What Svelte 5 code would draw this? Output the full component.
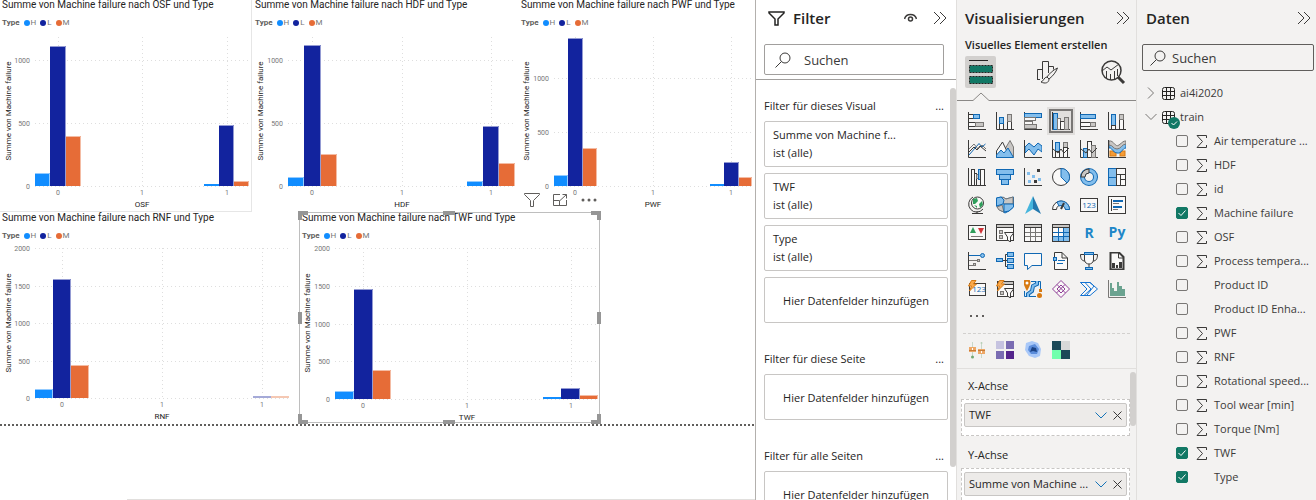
<script>
  const D = '#3b3a39', B = '#83beec', K = '#1068b3', G = '#c8c6c4', W = '#faf9f8', H = '#797775';
  const box = (x, y, w, h, fill, stroke) => `<rect x="${x}" y="${y}" width="${w}" height="${h}" fill="${fill}" stroke="${stroke}"/>`;
  const line = (d, stroke = D, fill = 'none', w = 1) => `<path d="${d}" stroke="${stroke}" fill="${fill}" stroke-width="${w}"/>`;
  const axis = line('M.5 0V17.5H18');
  const bolt = line('M3.500.5H8L5.500 4H8.500L1.500 11 3.500 6H.5Z', '#d87a12', '#fba94b');
  const funnel = line('M8.500 8.500H18L14.500 13V18L11.500 16V13Z', D, W);

  const icons = [
    ['Gestapeltes Balkendiagramm', axis + box(.5, 10.5, 7, 4, W, D) + box(7.5, 10.5, 8, 4, G, H) + box(.5, 2.5, 5, 4, W, D) + box(5.5, 2.5, 6, 4, B, K)],
    ['Gestapeltes Säulendiagramm', axis + box(3.5, 11.5, 4, 6, W, D) + box(3.5, 5.5, 4, 6, B, K) + box(11.5, 9.5, 4, 8, W, D) + box(11.5, 2.5, 4, 7, G, H)],
    ['Gruppiertes Balkendiagramm', axis + box(.5, 1.5, 17, 4, B, K) + box(.5, 5.5, 11, 3, W, H) + box(.5, 9.5, 8, 3, W, H) + box(.5, 12.5, 12, 4, G, H)],
    ['Gruppiertes Säulendiagramm', axis + box(1.5, 1.5, 4, 16, B, K) + box(5.5, 6.5, 3, 11, W, H) + box(8.5, 9.5, 4, 8, W, D) + box(12.5, 5.5, 4, 12, G, H)],
    ['Gestapelte Balken 100 %', axis + box(.5, 2.5, 15, 4, B, K) + box(.5, 10.5, 10, 4, W, D) + box(10.5, 10.5, 5, 4, G, H)],
    ['Gestapelte Säulen 100 %', axis + box(3.5, 2.5, 4, 11, B, K) + box(3.5, 13.5, 4, 4, W, D) + box(11.5, 7.5, 4, 10, W, D) + box(11.5, 2.5, 4, 5, G, H)],
    ['Liniendiagramm', axis + line('M1 15 11 3.500 14 7 17.500 4', K) + line('M1 9 6 4 10 9 14 5 18 9', H) + line('M1 12 6 7 9 10 12 6 18 11', D)],
    ['Flächendiagramm', line('M9 9 14 .5 17.500 7V17H13Z', H, G) + line('M.5 11 6.500 2 14 17.500H.5Z', D, W) + line('M.5 17.500V15L5 10 8 13 12 8 17.500 17.500Z', K, B)],
    ['Gestapeltes Flächendiagramm', line('M1 7 5 3 10 7 14 3 18 6V12L14 9 10 15 5 9 1 13Z', K, B) + axis],
    ['Linien und gestapelte Säulen', axis + box(3.5, 2.5, 4, 9, B, K) + box(3.5, 11.5, 4, 6, W, D) + box(11.5, 2.5, 4, 5, G, H) + box(11.5, 7.5, 4, 10, W, D) + line('M1 9 6 13 9 9 12 13 17 8')],
    ['Linien und gruppierte Säulen', axis + box(3.5, 8.5, 4, 9, B, K) + box(7.5, 1.5, 4, 16, W, D) + box(11.5, 5.5, 4, 12, G, H) + line('M1 9 6 13 9 9 12 13 17 8')],
    ['Menübanddiagramm', box(2, 11, 6, 5, '#f49b36', '#d87a12') + box(12, 11, 5, 5, '#f49b36', '#d87a12') + line('M1 3C6 2 7 12 12 7S16 3 18 3V8C14 8 14 14 9 13S4 7 1 8Z', K, B) + line('M1 1C6 0 7 8 11 5S15 1 18 1V4C14 4 13 9 9 9S5 5 1 5Z', H, G) + axis],
    ['Wasserfalldiagramm', axis + box(3.5, 1.5, 3, 16, W, D) + box(6.5, 5.5, 2, 12, W, D) + box(8.5, 6.5, 2, 4, G, H) + box(10.5, 1.5, 2, 10, B, K) + box(12.5, 1.5, 4, 16, W, D)],
    ['Trichter', box(.5, 1.5, 17, 5, B, K) + box(3.5, 6.5, 11, 5, B, K) + box(5.5, 11.5, 7, 5, B, K)],
    ['Punktdiagramm', axis + `<g fill="${B}"><path d="M3 4h3v3H3zM8 7h3v3H8zM4 12h3v3H4zM14 10h3v3h-3z"/></g><path fill="${D}" d="M13 1h3v3h-3zM10 12h3v3h-3z"/>`],
    ['Kreisdiagramm', `<circle cx="9" cy="9" r="8.500" fill="${W}" stroke="${D}"/>` + line('M9 9V.5A8.500 8.500 0 0 1 15 15Z', K, B)],
    ['Ringdiagramm', `<circle cx="9" cy="9" r="6.500" fill="none" stroke="${K}" stroke-width="5"/><circle cx="9" cy="9" r="6.500" fill="none" stroke="${B}" stroke-width="3"/>` + line('M1 9A8 8 0 0 1 9 1V5A4 4 0 0 0 5 9Z', D, G)],
    ['Treemap', box(.5, .5, 8, 9, B, K) + box(.5, 9.5, 8, 8, B, K) + box(8.5, .5, 9, 6, W, D) + box(8.5, 6.5, 4, 11, W, D) + box(12.5, 6.5, 5, 5, W, D) + box(12.5, 11.5, 5, 6, W, D)],
    ['Karte', `<circle cx="9.500" cy="7" r="6" fill="${W}" stroke="${D}"/><path d="M5 3l4-1 1 3-3 3-2 0zM11 8l3-3 1 4-3 3zM6 9l3 1v2z" fill="#2f9e5b"/>` + line('M5 1A8 8 0 1 0 15 13M9 15V17M4 17.500H15')],
    ['Flächenkartogramm', line('M.5 2 6 1 10 3 17.500 1V11L13 15 9 17 4 14 .5 10Z', K, B) + line('M7 1 10 3 17 1V8H8L5 5Z', H, G) + line('M1 11 6 9 8 16 3 14Z', H, G) + line('M.5 2V10L7 8 8 4 5 1ZM8 8 8 16 13 15 17.500 11V8Z', K, B)],
    ['Azure-Karte', '<path d="M9 0 1 18 9 13Z" fill="#45b5dd"/><path d="M9 0 17 18 9 13Z" fill="#2378ae"/>'],
    ['Messgerät', line('M.5 13.500A8.500 8.500 0 0 1 17.500 13.500H13.500A4.500 4.500 0 0 0 4.500 13.500Z', D, W) + line('M5 6A8.500 8.500 0 0 1 17.500 13.500H13.500A4.500 4.500 0 0 0 7 10Z', K, B) + line('M12 7 9 13', D, 'none', 2)],
    ['Karte mit Zahl', box(.5, 2.5, 17, 13, W, D) + `<text x="9" y="12" font-size="8" text-anchor="middle" fill="${K}">123</text>`],
    ['Mehrzeilige Karte', box(.5, .5, 17, 17, W, D) + line('M3.500 3V15', D) + line('M5 5H15M5 11H14', K, 'none', 2) + line('M5 7.500H11M5 13.500H10', H)],
    ['KPI', box(.5, 1.5, 17, 14, W, D) + '<path d="M2 9 5 3 8 9Z" fill="#2f9e5b"/><path d="M10 4H16L13 10Z" fill="#d13438"/>' + line('M3 12.500H15', H)],
    ['Datenschnitt', box(.5, .5, 17, 16, W, D) + box(1, 1, 16, 2, G, 'none') + line('M.5 3.500H18') + box(3.5, 6.5, 3, 3, G, H) + box(3.5, 11.5, 3, 3, G, H) + funnel],
    ['Tabelle', box(.5, .5, 17, 17, W, D) + box(1, 1, 16, 2, G, 'none') + line('M.5 3.500H18') + line('M1 8.500H17M1 12.500H17M6.500 4V17M11.500 4V17', H)],
    ['Matrix', box(.5, .5, 17, 17, W, D) + box(1, 1, 16, 2, G, 'none') + `<path fill="${B}" d="M12 4h5v13H1v-4h11z"/>` + line('M.5 3.500H18') + line('M1 8.500H17M1 12.500H17M6.500 4V17M11.500 4V17', K)],
    ['R-Skriptvisual', '<text x="9" y="14" font-size="14" font-weight="700" text-anchor="middle" fill="#2086c8">R</text>'],
    ['Python-Visual', '<text x="9" y="13" font-size="14" font-weight="700" text-anchor="middle" fill="#2086c8">Py</text>'],
    ['Wichtige Einflussfaktoren', axis + line('M1 3.500H12', K) + line('M1 8.500H9M1 13.500H5', H) + `<circle cx="14.500" cy="3.500" r="2" fill="${B}" stroke="${K}"/>` + box(9.5, 7.5, 2, 2, G, H) + box(5.5, 11.5, 2, 2, G, H)],
    ['Analysebaum', line('M6 8.500H12M9.500 2.500V14.500M9.500 2.500H12M9.500 14.500H12') + box(.5, 6.5, 6, 3, B, K) + box(11.5, .5, 6, 4, B, K) + box(11.5, 6.5, 6, 4, B, K) + box(11.5, 12.5, 6, 4, B, K)],
    ['Q&A', line('M.5 1.500H17.500V13.500H8L3.500 17.500V13.500H.5Z', K, W)],
    ['Smarte Erzählung', line('M2.500 5V.5H10L15.500 6V17.500H2.500V9M10 .5V6H15.500', D, W) + box(1.5, 5.5, 3, 3, B, K) + line('M6 8.500H13M5 11.500H11', K)],
    ['Metriken', line('M4.500 2.500H.5C.5 7 2 9 5 9M13.500 2.500H17.500C17.500 7 16 9 13 9') + line('M4.500 1V8C5 11 7 12 9 12S13 11 13.500 8V1M9 12V15', D, W) + box(4.5, .5, 9, 2, B, K) + box(5.5, 15.5, 7, 2, B, K)],
    ['Paginierter Bericht', line('M2.500.5H11L15.500 5V17.500H2.500Z', D, W, 2) + line('M10.500 1V6H15') + `<path fill="${D}" d="M4 11h3v5H4zM8 13h2v3H8zM11 10h3v6h-3z"/>`],
    ['Neue Karte', box(1.5, 3.5, 16, 12, W, D) + `<text x="11" y="12" font-size="8" text-anchor="middle" fill="${K}">123</text>` + bolt],
    ['Neuer Datenschnitt', box(1.5, 1.5, 16, 15, W, D) + box(7, 2, 10, 2, G, 'none') + line('M7 4.500H18') + box(4.5, 11.5, 3, 3, G, H) + funnel + bolt],
    ['ArcGIS Maps', line('M7 1.500H16.500V9M12 16.500H.5V11', K, '#dceffb') + line('M4 17V14L8 11 9 6 13 4V1', K, 'none', 4) + line('M4 17V14L8 11 9 6 13 4V1', B, 'none', 2) + '<path d="M3 11C-2 3-1-1 3-1S8 3 3 11Z" fill="#d87a12"/><circle cx="3" cy="3" r="1.500" fill="#fff"/><circle cx="15.500" cy="15.500" r="2.500" fill="#d87a12"/><path d="M15 9h3v3h-3z" fill="#d87a12"/>'],
    ['Power Apps', line('M9 .5 17.500 9 9 17.500.5 9ZM5 4.500 13.500 13M13 4.500 4.500 13M9 5 13 9 9 13 5 9Z', '#8f3f97', W)],
    ['Power Automate', line('M.5 2.500H10L17.500 9 10 15.500H.5L7 9Z', '#1473d2', W) + line('M.5 2.500 7 9M5 2.500 11 9 4 15.500M10 2.500 14 6 7 15M7 9 1 15', '#1473d2')],
    ['Histogramm', '<path d="M2 3h2v5h2v3h3V2h2v4h3v3h3v7H2z" fill="#6ba390"/>' + line('M.5 0V17.500H18', H)]
  ];

  const custom = [
    ['Boxplot', '<path d="M4.500 1V17M13.500 1V17" stroke="#c9d8c9" fill="none"/><path d="M1 6h7v5H1zM10 8h7v5h-7z" fill="#eda766"/><path d="M1 9h7v1H1zM10 9h7v1h-7z" fill="#c77b38"/><path d="M4 7h1v2H4zM13 10h1v2h-1z" fill="#fff"/><circle cx="4.500" cy="16" r="1.500" fill="#72a873"/><circle cx="13.500" cy="2" r="1" fill="#b8d2b8"/>'],
    ['Heatmap', '<path fill="#c6c3e0" d="M0 0h8v8H0z"/><path fill="#7a6cb2" d="M10 0h8v8h-8zM0 10h8v8H0z"/><path fill="#54248c" d="M10 10h8v8h-8z"/>'],
    ['Dichtekarte', '<path d="M2 2 8 0 14 2 17 8 16 15 11 17 5 15 1 9Z" fill="#a9c8f8"/><path d="M5 5 11 3 15 8 13 13 7 13 4 9Z" fill="#5c8ddb"/><path d="M8 6 12 7 13 11 9 10 6 11Z" fill="#1b4387"/>'],
    ['Kacheln', '<path fill="#1b4958" d="M0 0h9v9H0zM9 9h9v9H9z"/><path fill="#d8d8d8" d="M9 0h9v9H9z"/><path fill="#71ffad" d="M0 9h9v9H0z"/>']
  ];

  // Visuals in report coordinates; bars are [left, width, top, series].
  const visuals = [
    { name: 'OSF', x: 0, y: -2, w: 252, h: 214, cls: 'framed', base: 186, top: 37, from: 35, to: 249, cols: [58, 142, 227],
      ticks: [[60, '1000'], [123, '500'], [186, '0']], tx: 30, yx: 11, yc: 111,
      bars: [[35, 15, 173, 0], [50, 16, 46, 1], [66, 15, 136, 2], [204, 15, 184, 0], [219, 15, 125, 1], [234, 15, 181, 2]] },
    { name: 'HDF', x: 253, y: -2, w: 265, h: 214, cls: '', base: 186, top: 37, from: 288, to: 515, cols: [312, 402, 491],
      ticks: [[60, '1000'], [123, '500'], [186, '0']], tx: 283, yx: 263, yc: 111,
      bars: [[288, 16, 177, 0], [304, 17, 45, 1], [321, 16, 154, 2], [467, 16, 181, 0], [483, 16, 126, 1], [499, 16, 163, 2]] },
    { name: 'PWF', x: 519, y: -2, w: 236, h: 214, cls: '', base: 186, top: 37, from: 554, to: 752, cols: [575, 653, 731],
      ticks: [[78, '1000'], [132, '500'], [186, '0']], tx: 549, yx: 529, yc: 111,
      bars: [[554, 14, 175, 0], [568, 15, 38, 1], [583, 14, 148, 2], [710, 14, 184, 0], [724, 15, 162, 1], [739, 13, 177, 2]] },
    { name: 'RNF', x: 0, y: 211, w: 298, h: 212, cls: '', base: 398, top: 248, from: 35, to: 289, cols: [62, 162, 262],
      ticks: [[248, '2000'], [286, '1500'], [323, '1000'], [361, '500'], [398, '0']], tx: 30, yx: 11, yc: 323,
      bars: [[35, 18, 389, 0], [53, 18, 279, 1], [71, 18, 365, 2], [253, 18, 396, 3], [271, 18, 396, 4]] },
    { name: 'TWF', x: 300, y: 211, w: 300, h: 212, cls: 'selected', base: 399, top: 248, from: 335, to: 599, cols: [363, 467, 571],
      ticks: [[248, '2000'], [286, '1500'], [324, '1000'], [361, '500'], [399, '0']], tx: 330, yx: 310, yc: 323,
      bars: [[335, 19, 391, 0], [354, 19, 289, 1], [373, 18, 370, 2], [543, 18, 397, 0], [561, 19, 388, 1], [580, 18, 395, 2]] }
  ];
  const colors = ['#118dff', '#12239e', '#e66c37', '#a5aad8', '#f5c8b3'];
  const legend = ['H', 'L', 'M'];

  const sections = [
    { title: 'Filter für dieses Visual', cards: ['Summe von Machine f...', 'TWF', 'Type'] },
    { title: 'Filter für diese Seite', cards: [] },
    { title: 'Filter für alle Seiten', cards: [] }
  ];
  const wells = [['X-Achse', 'TWF'], ['Y-Achse', 'Summe von Machine ...']];
  const fields = [
    ['Air temperature ...', true, false], ['HDF', true, false], ['id', true, false], ['Machine failure', true, true],
    ['OSF', true, false], ['Process tempera...', true, false], ['Product ID', false, false],
    ['Product ID Enha...', false, false], ['PWF', true, false], ['RNF', true, false], ['Rotational speed...', true, false],
    ['Tool wear [min]', true, false], ['Torque [Nm]', true, false], ['TWF', true, true], ['Type', false, true]
  ];
</script>

{#snippet chevrons()}
  <svg width="14" height="14" viewBox="0 0 14 14" fill="none" stroke="#3b3a39"><path d="M1 1l6 6-6 6M7 1l6 6-6 6" /></svg>
{/snippet}

{#snippet magnifier()}
  <svg class="mag" width="16" height="16" viewBox="0 0 16 16" fill="none" stroke="#3b3a39"><circle cx="10" cy="6" r="5" /><path d="M6.500 9.500.5 15.500" /></svg>
{/snippet}

{#snippet tableIcon()}
  <svg width="13" height="13" viewBox="0 0 13 13" fill="none" stroke="#252423"><rect x=".5" y=".5" width="12" height="12" rx="2" /><path d="M0 4.500h13M0 8.500h13M4.500 0v13M8.500 0v13" /></svg>
{/snippet}

<div class="app">
  <main class="report">
    {#each visuals as v}
      <section class="visual {v.cls}" style="left:{v.x}px;top:{v.y}px;width:{v.w}px;height:{v.h}px">
        <h3>Summe von Machine failure nach {v.name} und Type</h3>
        <div class="legend"><b>Type</b>{#each legend as l, i}<span><i style="background:{colors[i]}"></i>{l}</span>{/each}</div>
        <svg class="plot" width={v.w} height={v.h - 35} viewBox="{v.x} {v.y + 35} {v.w} {v.h - 35}">
          <g class="grid">
            {#each v.ticks as [y]}<path d="M{v.from} {y + 0.5}H{v.to}" />{/each}
            {#each v.cols as x}<path d="M{x + 0.5} {v.top}V{v.base}" />{/each}
          </g>
          {#each v.bars as [x, w, t, c]}
            <rect {x} y={t} width={w} height={v.base - t} fill={colors[c]} />
            {#if v.base - t > 2}<path d="M{x} {t + 0.5}h{w - 0.5}V{v.base}" fill="none" stroke="#fff" stroke-opacity=".55" />{/if}
          {/each}
          {#each v.ticks as [y, label]}<text class="tick" x={v.tx} y={y + 3} text-anchor="end">{label}</text>{/each}
          {#each v.cols as x, i}<text class="tick" {x} y={v.base + 9} text-anchor="middle">{i ? 1 : 0}</text>{/each}
          <text class="name" x={v.cols[1]} y={v.base + 21} text-anchor="middle">{v.name}</text>
          <text class="name" text-anchor="middle" transform="translate({v.yx} {v.yc}) rotate(-90)">Summe von Machine failure</text>
        </svg>
        {#if v.cls === 'selected'}
          <svg class="handles" width="304" height="214" viewBox="0 0 304 214" fill="none">
            <rect x="1.500" y="2.500" width="300" height="210" stroke="#bebebe" />
            <path d="M2 10V3H10M293 3H301V10M301 204V212H293M10 212H2V204M145 3H157M145 212H157M2 102V114M301 102V114" stroke="#969696" stroke-width="4" />
          </svg>
        {/if}
      </section>
    {/each}
    <div class="tools">
      <button aria-label="Filter"><svg width="16" height="16" viewBox="0 0 16 16" fill="#fff" stroke="#605e5c"><path d="M.5 1.500h15v1L9.500 8.500v6h-3v-6L.5 2.500Z" /></svg></button>
      <button aria-label="Fokusmodus"><svg width="15" height="14" viewBox="0 0 15 14" fill="none" stroke="#605e5c"><path d="M7 1.500H.5v11h13V7M.5 7.500h6v5M7 7.500 13.500 1.500M9.500 1.500h4v4" /></svg></button>
      <button aria-label="Weitere Optionen"><svg width="16" height="4" viewBox="0 0 16 4" fill="#605e5c"><circle cx="2" cy="2" r="1.500" /><circle cx="8" cy="2" r="1.500" /><circle cx="14" cy="2" r="1.500" /></svg></button>
    </div>
    <div class="page-end"></div>
    <div class="tabs"></div>
  </main>

  <aside class="filters">
    <header>
      <svg width="17" height="15" viewBox="0 0 17 15" fill="none" stroke="#252423" stroke-width="1.500"><path d="M1 1h15v1L10 8v6H7V8L1 2Z" /></svg>
      <h2>Filter</h2>
      <button class="eye" aria-label="Filterbereich anzeigen"><svg width="13" height="10" viewBox="0 0 13 10" fill="none" stroke="#3b3a39"><path d="M.5 6C2 0 11 0 12.500 6" stroke-width="1.500" /><circle cx="6.500" cy="6" r="2" stroke-width="1.500" /></svg></button>
      <button aria-label="Filter einklappen">{@render chevrons()}</button>
    </header>
    <label class="search">{@render magnifier()}<input type="text" placeholder="Suchen" aria-label="Suchen" /></label>
    <div class="filter-list">
      {#each sections as s}
        <div class="section-head"><span>{s.title}</span><button aria-label="Mehr">...</button></div>
        {#each s.cards as c}
          <div class="card"><div>{c}</div><div>ist (alle)</div></div>
        {/each}
        <div class="card drop">Hier Datenfelder hinzufügen</div>
      {/each}
      <div class="thumb"></div>
    </div>
  </aside>

  <aside class="vis">
    <header><h2>Visualisierungen</h2><button aria-label="Visualisierungen einklappen">{@render chevrons()}</button></header>
    <h4>Visuelles Element erstellen</h4>
    <div class="modes">
      <button class="on" aria-label="Visual erstellen"><svg width="24" height="26" viewBox="0 0 24 26"><path d="M0 1.500h19" stroke="#252423" /><g fill="#117865" stroke="#252423" stroke-dasharray="2 1"><rect x=".5" y="6.500" width="23" height="7" /><rect x=".5" y="17.500" width="23" height="7" /></g></svg></button>
      <button aria-label="Visual formatieren"><svg width="24" height="26" viewBox="0 0 24 26" fill="none" stroke="#3b3a39"><path d="M2.500 21V10.500h5M7.500 20V2.500h6V14M13.500 7.500h5v3M5 20.500H2" /><path d="M22.500 9C18 11 14 15 12 18l2 2c4-3 7-7 8.500-11ZM12 18c-3 0-3 4-6 5 4 2 8 1 8-3" fill="#f3f2f1" /></svg></button>
      <button aria-label="Analysen"><svg width="26" height="26" viewBox="0 0 26 26" fill="none" stroke="#3b3a39"><circle cx="11.500" cy="11.500" r="9.500" stroke-width="1.500" /><path d="M2 12l5-4 4 3 8-6M6.500 12v7M10.500 15v6M14.500 12v8M17.500 10v7" /><path d="m18 18 6 6" stroke-width="3" /></svg></button>
    </div>
    <svg class="divider" width="180" height="10" viewBox="0 0 180 10" fill="none" stroke="#8a8886"><path d="M0 8.500H16L24 1 32 8.500H180" /></svg>
    <div class="icons">
      {#each icons as [label, art], i}
        <button class:active={i === 3} aria-label={label}><svg width="18" height="18" viewBox="0 0 18 18">{@html art}</svg></button>
      {/each}
      <button aria-label="Weitere Visuals abrufen"><svg width="18" height="18" viewBox="0 0 18 18" fill="#605e5c"><path d="M2 7h2v2H2zM8 7h2v2H8zM14 7h2v2h-2z" /></svg></button>
    </div>
    <div class="icons custom">
      {#each custom as [label, art]}
        <button aria-label={label}><svg width="18" height="18" viewBox="0 0 18 18">{@html art}</svg></button>
      {/each}
    </div>
    <div class="wells">
      {#each wells as [label, value]}
        <h5>{label}</h5>
        <div class="well">
          <div class="pill">
            <span>{value}</span>
            <button aria-label="Menü"><svg width="12" height="7" viewBox="0 0 12 7" fill="none" stroke="#1473b8"><path d="m.5.5 5.500 5.500L11.500.5" /></svg></button>
            <button aria-label="Entfernen"><svg width="9" height="9" viewBox="0 0 9 9" fill="none" stroke="#3b3a39"><path d="m.5.5 8 8M8.500.5l-8 8" /></svg></button>
          </div>
        </div>
      {/each}
      <div class="thumb"></div>
    </div>
  </aside>

  <aside class="data">
    <header><h2>Daten</h2><button aria-label="Daten einklappen">{@render chevrons()}</button></header>
    <label class="search">{@render magnifier()}<input type="text" placeholder="Suchen" aria-label="Felder suchen" /></label>
    <div class="tree">
      <div class="table-row"><svg width="12" height="12" viewBox="0 0 12 12" fill="none" stroke="#797775"><path d="m3 .5 5.500 5.500L3 11.500" /></svg>{@render tableIcon()}<span>ai4i2020</span></div>
      <div class="table-row"><svg width="12" height="12" viewBox="0 0 12 12" fill="none" stroke="#797775"><path d="m.5 3 5.500 5.500L11.500 3" /></svg>
        <span class="badged">{@render tableIcon()}<svg class="badge" width="12" height="12" viewBox="0 0 12 12"><circle cx="6" cy="6" r="6" fill="#117865" /><path d="m3.500 6 2 2 3.500-3.500" fill="none" stroke="#fff" /></svg></span><span>train</span></div>
      {#each fields as [name, sum, checked]}
        <label class="field">
          <input type="checkbox" {checked} />
          <span class="sigma">{#if sum}<svg width="11" height="13" viewBox="0 0 11 13" fill="none" stroke="#3b3a39"><path d="M10.500 3V.5H1L6.500 6.500 1 12.500H10.500V10" /></svg>{/if}</span>
          <span class="name-text">{name}</span>
        </label>
      {/each}
    </div>
  </aside>
</div>

<style>
  :global(body) { margin: 0; overflow: hidden; }
  .app { display: grid; grid-template-columns: minmax(0, 1fr) 201px 181px 179px; height: 100vh; overflow: hidden; font: 11px/18px "Open Sans", "Noto Sans", sans-serif; color: #252423; background: #fff; }
  * { box-sizing: border-box; }
  h2, h3, h4, h5 { margin: 0; font-weight: 400; }
  button { border: 0; padding: 0; margin: 0; background: none; font: inherit; color: inherit; display: flex; align-items: center; justify-content: center; }
  svg { flex: none; display: block; }

  .report { position: relative; overflow: hidden; font-family: Roboto, sans-serif; }
  .visual { position: absolute; }
  .framed { border: solid #e6e6e6; border-width: 0 1px 1px 0; }
  .visual h3 { font-size: 10px; line-height: 14px; padding-left: 2px; white-space: nowrap; }
  .legend { display: flex; align-items: center; gap: 4px; height: 21px; padding-left: 2px; font-size: 8px; color: #777; }
  .legend b { color: #605e5c; }
  .legend span { display: flex; align-items: center; gap: 1px; }
  .legend i { width: 6px; height: 6px; border-radius: 50%; }
  .plot { overflow: visible; }
  .grid path { stroke: #dedede; stroke-dasharray: 1 3; fill: none; }
  .tick { font-size: 7px; fill: #777; }
  .name { font-size: 8px; fill: #252423; }
  .handles { position: absolute; left: -2px; top: -1px; }
  .tools { position: absolute; left: 524px; top: 192px; display: flex; gap: 13px; height: 16px; }
  .page-end { position: absolute; left: 0; right: 0; top: 424px; height: 2px; background: repeating-linear-gradient(90deg, #605e5c 0 2px, transparent 2px 4px); }
  .tabs { position: absolute; left: 127px; right: 0; bottom: 0; height: 1px; background: #e1dfdd; }

  aside { min-width: 0; overflow: hidden; display: flex; flex-direction: column; }
  header { display: flex; align-items: center; height: 36px; flex: none; }
  h2 { font-size: 15px; line-height: 22px; font-weight: 600; flex: 1; }
  .search { display: flex; align-items: center; border: 1px solid #a19f9d; border-radius: 2px; flex: none; font-size: 13px; }
  .search input { border: 0; outline: 0; background: none; font: inherit; min-width: 0; flex: 1; padding: 0; }
  .search input::placeholder { color: #3b3a39; opacity: 1; }

  .filters { border-left: 1px solid #b3b0ad; }
  .filters header { padding: 0 9px 0 12px; }
  .filters h2 { padding-left: 8px; }
  .eye { margin-right: 16px; }
  .filters .search { height: 31px; margin: 8px 12px 4px 8px; gap: 13px; padding-left: 10px; }
  .filter-list { position: relative; border-top: 1px solid #a19f9d; flex: 1; padding: 0 8px; overflow: hidden; }
  .section-head { display: flex; justify-content: space-between; align-items: center; height: 51px; padding: 20px 4px 0 0; }
  .section-head:first-child { height: 41px; padding-top: 10px; }
  .card { border: 1px solid #c8c6c4; border-radius: 2px; height: 46px; padding: 4px 8px; margin-bottom: 6px; white-space: nowrap; }
  .card.drop { padding: 2px 0 0; margin: 0; display: flex; align-items: center; justify-content: center; }
  .thumb { position: absolute; right: 0; width: 6px; border-radius: 3px; background: #d2d0ce; }
  .filter-list .thumb { top: 8px; height: 379px; }

  .vis { background: #f3f2f1; border: solid #e1dfdd; border-width: 0 1px; }
  .vis header { padding: 0 6px 0 8px; }
  .vis h4 { padding-left: 8px; font-weight: 600; line-height: 18px; white-space: nowrap; }
  .modes { display: flex; padding: 2px 8px 4px; gap: 35px; flex: none; }
  .modes button { width: 32px; height: 32px; border-radius: 2px; }
  .modes .on { background: #d2d0ce; }
  .icons { display: grid; grid-template-columns: repeat(6, 28px); grid-auto-rows: 28px; padding: 5px 6px 2px; flex: none; }
  .icons button :global(text) { font-family: "Open Sans", sans-serif; }
  .icons .active { background: #e1dfdd; outline: 2px solid #797775; outline-offset: -4px; }
  .icons.custom { margin: 0 6px; padding: 2px 0 4px; border-top: 1px dashed #d2d0ce; }
  .wells { position: relative; flex: 1; border-top: 1px solid #e1dfdd; overflow: hidden; }
  .wells .thumb { top: 3px; height: 54px; }
  h5 { font-size: 11px; line-height: 18px; padding: 8px 11px 4px; }
  .well { border: 1px dashed #c8c6c4; background: #fff; margin: 0 6px 2px 4px; padding: 3px 2px 8px; }
  .pill { display: flex; align-items: center; height: 24px; border: 1px solid #c8c6c4; border-radius: 2px; background: #edebe9; padding: 0 4px; gap: 6px; }
  .pill span { flex: 1; white-space: nowrap; }

  .data { background: #f3f2f1; }
  .data header { padding: 0 5px 0 9px; }
  .data .search { height: 27px; margin: 8px 2px 10px 5px; border-color: #605e5c; gap: 6px; padding-left: 7px; }
  .table-row, .field { display: flex; align-items: center; height: 24px; color: #3b3a39; }
  .table-row { padding-left: 8px; gap: 5px; }
  .badged { position: relative; }
  .badge { position: absolute; left: 6px; top: 6px; }
  .field { padding: 0 4px 0 39px; }
  .field input { appearance: none; width: 12px; height: 12px; margin: 0 8px 0 0; border: 1px solid #797775; border-radius: 2px; background: #f3f2f1; flex: none; }
  .field input:checked { border-color: #117865; background: #117865 url("data:image/svg+xml,%3Csvg xmlns='http://www.w3.org/2000/svg' viewBox='0 0 10 10'%3E%3Cpath d='m1.500 5 2.500 2.500 4.500-5' fill='none' stroke='white'/%3E%3C/svg%3E"); }
  .sigma { width: 18px; flex: none; }
  .name-text { white-space: nowrap; }
</style>
